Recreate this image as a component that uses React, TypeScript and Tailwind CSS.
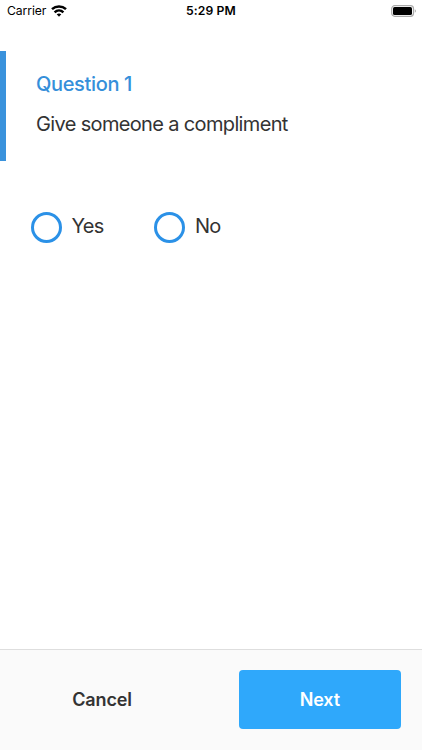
function WifiIcon() {
  return (
    <svg className="h-[13px] w-4" viewBox="0 0 16 13" fill="none" stroke="#000" strokeWidth="2.5">
      <path d="M1 4.2C5 .5 11 .5 15 4.2" />
      <path d="M3.6 7.3c2.5-2.3 6.3-2.3 8.8 0" />
      <path d="M5.7 9.3c1.3-1.2 3.3-1.2 4.6 0L8 11.7z" fill="#000" stroke="none" />
    </svg>
  );
}

function BatteryIcon() {
  return (
    <svg className="h-3 w-[26px]" viewBox="0 0 26 12">
      <rect x="0.7" y="0.7" width="21.8" height="10.6" rx="3" fill="#fff" stroke="#aaa" strokeWidth="1.2" />
      <rect x="2" y="2" width="19" height="8" rx="1.6" fill="#000" />
      <path d="M23.8 4.2c1.5.6 1.5 3 0 3.6z" fill="#aaa" />
    </svg>
  );
}

function StatusBar() {
  return (
    <header className="flex h-[22px] items-center text-[13px] leading-[22px] text-black">
      <div className="flex w-[186px] items-center gap-[5px] pl-[7px]">
        <span className="w-[39px] text-[12.2px] tracking-[-0.1px]">Carrier</span>
        <WifiIcon />
      </div>
      <span className="text-[12.2px] font-semibold tracking-[0.12px] whitespace-nowrap">5:29 PM</span>
      <div className="mr-[5px] ml-auto flex">
        <BatteryIcon />
      </div>
    </header>
  );
}

function Choice({ label }: { label: string }) {
  return (
    <button className="flex h-[31px] w-[123.5px] items-center gap-2.5 text-left">
      <span className="size-[31px] shrink-0 rounded-full border-[3px] border-[#2b91e7]" />
      <span className="-mt-[3px] text-[20px] leading-7 tracking-[-0.7px] text-[#333]">{label}</span>
    </button>
  );
}

export default function App() {
  return (
    <div className="flex h-[750px] w-full flex-col bg-white font-['Inter',sans-serif]">
      <StatusBar />
      <main className="flex-1 pt-[29px]">
        <section className="flex h-[110px]">
          <div className="w-[5.5px] bg-[#3a92dc]" />
          <div className="pt-5 pl-[30.5px]">
            <h1 className="text-[20px] leading-[27px] font-medium tracking-[-0.35px] text-[#358fda]">Question 1</h1>
            <p className="mt-[13px] text-[20px] leading-[27px] tracking-[-0.65px] text-[#333]">Give someone a compliment</p>
          </div>
        </section>
        <div className="mt-[51px] flex pl-[30.5px]">
          <Choice label="Yes" />
          <Choice label="No" />
        </div>
      </main>
      <footer className="flex h-[101px] items-start justify-between border-t border-[#dedede] bg-[#fafafa] pt-5 pr-[21px] pl-[20.5px] text-[18px] font-semibold tracking-[-0.15px]">
        <button className="h-[59px] w-[163px] text-[#333]">Cancel</button>
        <button className="h-[59px] w-[162.5px] rounded-[4px] bg-[#2fa8fb] text-white">Next</button>
      </footer>
    </div>
  );
}
